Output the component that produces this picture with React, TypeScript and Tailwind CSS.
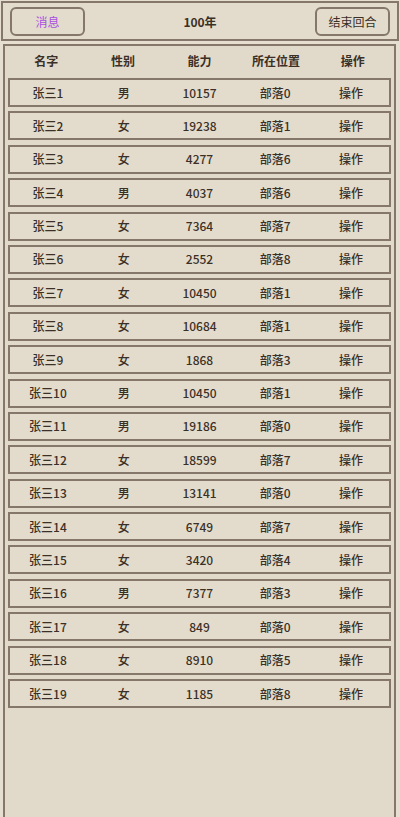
const PEOPLE = [
  { name: '张三1', sex: '男', power: 10157, place: '部落0' },
  { name: '张三2', sex: '女', power: 19238, place: '部落1' },
  { name: '张三3', sex: '女', power: 4277, place: '部落6' },
  { name: '张三4', sex: '男', power: 4037, place: '部落6' },
  { name: '张三5', sex: '女', power: 7364, place: '部落7' },
  { name: '张三6', sex: '女', power: 2552, place: '部落8' },
  { name: '张三7', sex: '女', power: 10450, place: '部落1' },
  { name: '张三8', sex: '女', power: 10684, place: '部落1' },
  { name: '张三9', sex: '女', power: 1868, place: '部落3' },
  { name: '张三10', sex: '男', power: 10450, place: '部落1' },
  { name: '张三11', sex: '男', power: 19186, place: '部落0' },
  { name: '张三12', sex: '女', power: 18599, place: '部落7' },
  { name: '张三13', sex: '男', power: 13141, place: '部落0' },
  { name: '张三14', sex: '女', power: 6749, place: '部落7' },
  { name: '张三15', sex: '女', power: 3420, place: '部落4' },
  { name: '张三16', sex: '男', power: 7377, place: '部落3' },
  { name: '张三17', sex: '女', power: 849, place: '部落0' },
  { name: '张三18', sex: '女', power: 8910, place: '部落5' },
  { name: '张三19', sex: '女', power: 1185, place: '部落8' },
]

const HEADERS = ['名字', '性别', '能力', '所在位置', '操作']

function HeaderButton({ label, purple }: { label: string; purple?: boolean }) {
  return (
    <button
      className={`w-[75px] h-[29px] border-2 border-[#85786a] rounded-[6px] bg-[#e3dccd] text-[12px] ${
        purple ? 'text-[#a84fe0]' : 'text-[#3b3026]'
      }`}
    >
      {label}
    </button>
  )
}

export default function App() {
  return (
    <div
      className="w-[400px] h-[817px] overflow-hidden bg-[#e6dfd1] flex flex-col text-[#3b3026]"
      style={{ fontFamily: '"Noto Sans CJK SC", "Liberation Sans", sans-serif' }}
    >
      <div className="mx-[1px] mt-[1px] h-[40px] border-2 border-[#85786a] bg-[#e3dccd] flex items-center justify-between pl-[7px] pr-[7px] pt-[1px]">
        <HeaderButton label="消息" purple />
        <span className="text-[12px] font-bold">100年</span>
        <HeaderButton label="结束回合" />
      </div>

      <div className="mt-[3px] ml-[3px] mr-[4px] flex-1 border-2 border-b-0 border-[#85786a] bg-[#e1dacb] px-[3px]">
        <div className="h-[30px] grid grid-cols-5 items-center text-[12px] font-bold">
          {HEADERS.map((h) => (
            <div key={h} className="text-center">
              {h}
            </div>
          ))}
        </div>
        <div className="mt-[2px] flex flex-col gap-[4.4px]">
          {PEOPLE.map((p) => (
            <div
              key={p.name}
              className="h-[29px] grid grid-cols-5 items-center border-2 border-[#85786a] bg-[#e3dccd] text-[12px] font-medium"
            >
              <div className="text-center">{p.name}</div>
              <div className="text-center">{p.sex}</div>
              <div className="text-center">{p.power}</div>
              <div className="text-center">{p.place}</div>
              <div className="text-center">操作</div>
            </div>
          ))}
        </div>
      </div>
    </div>
  )
}
